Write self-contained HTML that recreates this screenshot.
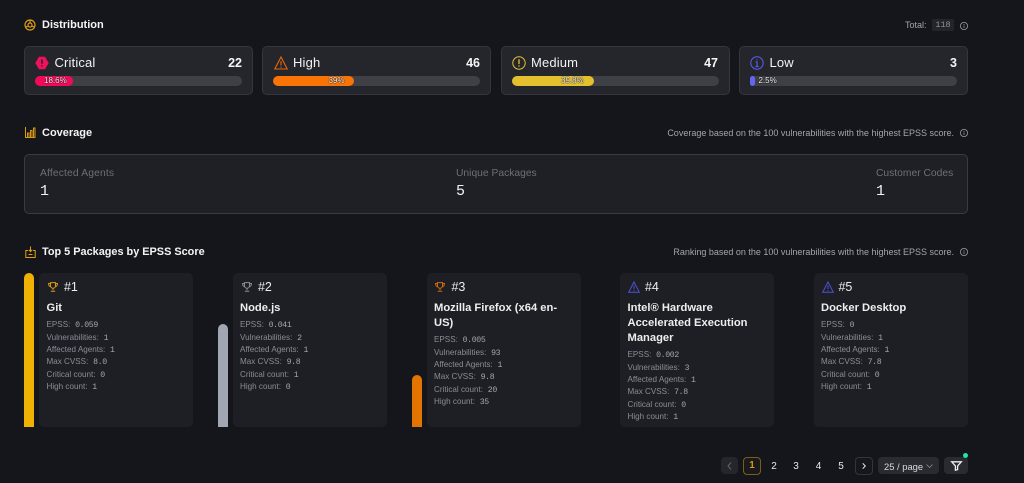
<!DOCTYPE html>
<html><head><meta charset="utf-8"><style>
html,body{margin:0;padding:0;background:#15161b;}
body{width:1024px;height:483px;position:relative;overflow:hidden;font-family:"Liberation Sans",sans-serif;color:#fff;}
.a{position:absolute;white-space:nowrap;}
svg{position:absolute;overflow:visible;}
.h{font-size:11px;font-weight:700;line-height:14px;color:#f4f4f5;}
.n{font-size:9px;color:#a3a5ab;line-height:12px;}
.sev{position:absolute;top:46px;height:47px;width:227px;background:#25262c;border:1px solid #35363c;border-radius:5px;}
.track{position:absolute;top:76px;height:10px;width:207px;background:#3f4046;border-radius:5px;}
.fill{position:absolute;top:76px;height:10px;border-radius:5px;}
.pct{font-size:8px;line-height:10px;top:76px;color:#f6f6f6;text-shadow:0 0 1px #000,0 0 1px #000;}
.lab{font-size:13px;line-height:16px;top:55px;color:#f2f2f4;letter-spacing:.15px;}
.num{font-size:12.5px;font-weight:700;line-height:16px;top:55px;color:#f5f5f5;}
.cl{font-size:10.3px;line-height:13px;top:167px;color:#6c6f77;}
.cv{font-size:15px;line-height:16px;top:184px;color:#f1f1f1;font-family:"Liberation Mono",monospace;}
.card{position:absolute;top:273px;height:154px;width:154px;background:#1e1f25;border-radius:5px;}
.bar{position:absolute;width:10px;border-radius:5px 5px 0 0;}
.rk{font-size:12.5px;line-height:16px;top:279px;color:#ececee;letter-spacing:-.1px;}
.t{font-size:11.2px;font-weight:700;line-height:15px;color:#eeeeef;}
.r{font-size:8.1px;line-height:12px;color:#8a8d95;}
.r b{font-family:"Liberation Mono",monospace;font-weight:400;color:#a4a6ac;margin-left:2.5px;font-size:8.2px;letter-spacing:-.35px;}
.pg{font-size:10px;line-height:17px;top:458px;color:#e8e8ea;text-align:center;width:18px;}
</style></head><body>

<!-- Distribution -->
<svg style="left:24px;top:19px" width="12" height="12" viewBox="0 0 12 12" fill="none" stroke="#e0a010" stroke-width="1.15"><circle cx="6" cy="6" r="5"/><circle cx="6" cy="6" r="2"/><path d="M6 1v3M1.5 8l3-1M10.5 8l-3-1"/></svg>
<div class="a h" style="left:42px;top:18px">Distribution</div>
<div class="a n" style="left:905px;top:19px">Total:</div>
<div class="a" style="left:932px;top:19px;width:22px;height:12px;background:#24252b;border-radius:2px;font:8.5px/12px 'Liberation Mono',monospace;color:#8f9197;text-align:center">118</div>
<svg style="left:959.5px;top:21.5px" width="8" height="8" viewBox="0 0 8 8" fill="none" stroke="#9a9ca2" stroke-width=".8"><circle cx="4" cy="4" r="3.6"/><path d="M4 3.5v2.4M4 2v.9"/></svg>

<div class="sev" style="left:24px"></div>
<div class="sev" style="left:262px"></div>
<div class="sev" style="left:500.5px"></div>
<div class="sev" style="left:739px"></div>

<svg style="left:35px;top:56px" width="14" height="14" viewBox="0 0 14 14"><path d="M4 .8h6l3.7 6.2-3.7 6.2H4L.3 7z" fill="#f0105c"/><path d="M7 3.5v4.2M7 9.2v1.2" stroke="#25262c" stroke-width="1.6"/></svg>
<div class="a lab" style="left:54.5px">Critical</div>
<div class="a num" style="right:782px">22</div>
<div class="track" style="left:35px"></div>
<div class="fill" style="left:35px;width:38px;background:#f4095a"></div>
<div class="a pct" style="left:44px">18.6%</div>

<svg style="left:274px;top:56px" width="14" height="14" viewBox="0 0 14 14" fill="none" stroke="#e8660c" stroke-width="1.1"><path d="M7 1L.8 13h12.4z"/><path d="M7 5v4.5M7 10.6v1"/></svg>
<div class="a lab" style="left:293px">High</div>
<div class="a num" style="right:544px">46</div>
<div class="track" style="left:273px"></div>
<div class="fill" style="left:273px;width:81px;background:#f97306"></div>
<div class="a pct" style="left:328.5px">39%</div>

<svg style="left:512px;top:56px" width="14" height="14" viewBox="0 0 14 14" fill="none" stroke="#e4c02e" stroke-width="1"><circle cx="7" cy="7" r="6.2"/><path d="M7 3.3v4.8M7 9.4v1.2" stroke-width="1.3"/></svg>
<div class="a lab" style="left:531px">Medium</div>
<div class="a num" style="right:306px">47</div>
<div class="track" style="left:511.5px"></div>
<div class="fill" style="left:511.5px;width:82px;background:#e4c02e"></div>
<div class="a pct" style="left:561px">39.8%</div>

<svg style="left:750px;top:56px" width="14" height="14" viewBox="0 0 14 14" fill="none" stroke="#5b5ff0" stroke-width="1"><circle cx="7" cy="7" r="6.2"/><path d="M5.5 6h1.6v4.4M5.3 10.6h3.4M7 3.2v1.2" stroke-width="1.1"/></svg>
<div class="a lab" style="left:769.5px">Low</div>
<div class="a num" style="right:67px">3</div>
<div class="track" style="left:749.5px"></div>
<div class="fill" style="left:749.5px;width:5.5px;background:#6366f1"></div>
<div class="a pct" style="left:758.5px">2.5%</div>

<!-- Coverage -->
<svg style="left:25px;top:127px" width="11" height="11" viewBox="0 0 11 11" fill="none" stroke="#d99a12" stroke-width="1"><path d="M.5 0v10.5h10M2.5 6h1.5v4.5H2.5zM5.5 3.5H7v7H5.5zM8.5 1H10v9.5H8.5z"/></svg>
<div class="a h" style="left:42px;top:126px">Coverage</div>
<div class="a n" style="right:70px;top:127px">Coverage based on the 100 vulnerabilities with the highest EPSS score.</div>
<svg style="left:959.5px;top:129px" width="8" height="8" viewBox="0 0 8 8" fill="none" stroke="#9a9ca2" stroke-width=".8"><circle cx="4" cy="4" r="3.6"/><path d="M4 3.5v2.4M4 2v.9"/></svg>

<div class="a" style="left:24px;top:154px;width:942px;height:58px;background:#1f2026;border:1px solid #3a3b41;border-radius:5px"></div>
<div class="a cl" style="left:40px;letter-spacing:.15px">Affected Agents</div>
<div class="a cv" style="left:40px">1</div>
<div class="a cl" style="left:456px">Unique Packages</div>
<div class="a cv" style="left:456px">5</div>
<div class="a cl" style="left:876px">Customer Codes</div>
<div class="a cv" style="left:876px">1</div>

<!-- Top 5 -->
<svg style="left:25px;top:246px" width="11" height="12" viewBox="0 0 11 12" fill="none" stroke="#e0a010" stroke-width="1"><path d="M3 4.5H.8v7h9.4v-7H8M5.5 .5v5M3.8 3.8l1.7 1.8 1.7-1.8M3.5 8.5h4" /></svg>
<div class="a h" style="left:42px;top:245px;font-size:10.9px">Top 5 Packages by EPSS Score</div>
<div class="a n" style="right:70px;top:246px">Ranking based on the 100 vulnerabilities with the highest EPSS score.</div>
<svg style="left:959.5px;top:248px" width="8" height="8" viewBox="0 0 8 8" fill="none" stroke="#9a9ca2" stroke-width=".8"><circle cx="4" cy="4" r="3.6"/><path d="M4 3.5v2.4M4 2v.9"/></svg>

<div class="bar" style="left:24px;top:273px;height:154px;background:#f0b105"></div>
<div class="card" style="left:39px"></div>
<div class="bar" style="left:218px;top:324px;height:103px;background:#a0a7b3"></div>
<div class="card" style="left:233px"></div>
<div class="bar" style="left:411.5px;top:375px;height:52px;background:#e37400"></div>
<div class="card" style="left:426.5px"></div>
<div class="card" style="left:620px"></div>
<div class="card" style="left:813.7px"></div>

<!-- Card 1 -->
<svg style="left:48px;top:282px" width="10" height="10" viewBox="0 0 10 10" fill="none" stroke="#d99a12" stroke-width="1"><path d="M2.5.6h5v3.2a2.5 2.5 0 0 1-5 0zM2.5 1.5H.6c0 2 .8 3 1.9 3M7.5 1.5h1.9c0 2-.8 3-1.9 3M5 6.3v2M2.8 9.3h4.4"/></svg>
<div class="a rk" style="left:64px">#1</div>
<div class="a t" style="left:46.5px;top:301px">Git</div>
<div class="a r" style="left:46.5px;top:319px">EPSS: <b>0.059</b></div>
<div class="a r" style="left:46.5px;top:331.5px">Vulnerabilities: <b>1</b></div>
<div class="a r" style="left:46.5px;top:344px">Affected Agents: <b>1</b></div>
<div class="a r" style="left:46.5px;top:356px">Max CVSS: <b>8.0</b></div>
<div class="a r" style="left:46.5px;top:368.5px">Critical count: <b>0</b></div>
<div class="a r" style="left:46.5px;top:381px">High count: <b>1</b></div>

<!-- Card 2 -->
<svg style="left:241.5px;top:282px" width="10" height="10" viewBox="0 0 10 10" fill="none" stroke="#8b8e96" stroke-width="1"><path d="M2.5.6h5v3.2a2.5 2.5 0 0 1-5 0zM2.5 1.5H.6c0 2 .8 3 1.9 3M7.5 1.5h1.9c0 2-.8 3-1.9 3M5 6.3v2M2.8 9.3h4.4"/></svg>
<div class="a rk" style="left:258px">#2</div>
<div class="a t" style="left:240px;top:301px">Node.js</div>
<div class="a r" style="left:240px;top:319px">EPSS: <b>0.041</b></div>
<div class="a r" style="left:240px;top:331.5px">Vulnerabilities: <b>2</b></div>
<div class="a r" style="left:240px;top:344px">Affected Agents: <b>1</b></div>
<div class="a r" style="left:240px;top:356px">Max CVSS: <b>9.8</b></div>
<div class="a r" style="left:240px;top:368.5px">Critical count: <b>1</b></div>
<div class="a r" style="left:240px;top:381px">High count: <b>0</b></div>

<!-- Card 3 -->
<svg style="left:435px;top:282px" width="10" height="10" viewBox="0 0 10 10" fill="none" stroke="#d2690c" stroke-width="1"><path d="M2.5.6h5v3.2a2.5 2.5 0 0 1-5 0zM2.5 1.5H.6c0 2 .8 3 1.9 3M7.5 1.5h1.9c0 2-.8 3-1.9 3M5 6.3v2M2.8 9.3h4.4"/></svg>
<div class="a rk" style="left:451.5px">#3</div>
<div class="a t" style="left:434px;top:301px">Mozilla Firefox (x64 en-</div>
<div class="a t" style="left:434px;top:316px">US)</div>
<div class="a r" style="left:434px;top:334px">EPSS: <b>0.005</b></div>
<div class="a r" style="left:434px;top:346.5px">Vulnerabilities: <b>93</b></div>
<div class="a r" style="left:434px;top:359px">Affected Agents: <b>1</b></div>
<div class="a r" style="left:434px;top:371px">Max CVSS: <b>9.8</b></div>
<div class="a r" style="left:434px;top:383.5px">Critical count: <b>20</b></div>
<div class="a r" style="left:434px;top:396px">High count: <b>35</b></div>

<!-- Card 4 -->
<svg style="left:628px;top:281px" width="12" height="12" viewBox="0 0 12 12" fill="none" stroke="#4f52d8" stroke-width="1"><path d="M6 1L.7 11.2h10.6z"/><path d="M6 4.5v3.6M6 9v1"/></svg>
<div class="a rk" style="left:645px">#4</div>
<div class="a t" style="left:627.5px;top:301px">Intel® Hardware</div>
<div class="a t" style="left:627.5px;top:316px">Accelerated Execution</div>
<div class="a t" style="left:627.5px;top:331px">Manager</div>
<div class="a r" style="left:627.5px;top:349px">EPSS: <b>0.002</b></div>
<div class="a r" style="left:627.5px;top:361.5px">Vulnerabilities: <b>3</b></div>
<div class="a r" style="left:627.5px;top:374px">Affected Agents: <b>1</b></div>
<div class="a r" style="left:627.5px;top:386px">Max CVSS: <b>7.8</b></div>
<div class="a r" style="left:627.5px;top:398.5px">Critical count: <b>0</b></div>
<div class="a r" style="left:627.5px;top:411px">High count: <b>1</b></div>

<!-- Card 5 -->
<svg style="left:821.5px;top:281px" width="12" height="12" viewBox="0 0 12 12" fill="none" stroke="#4f52d8" stroke-width="1"><path d="M6 1L.7 11.2h10.6z"/><path d="M6 4.5v3.6M6 9v1"/></svg>
<div class="a rk" style="left:838.5px">#5</div>
<div class="a t" style="left:821px;top:301px">Docker Desktop</div>
<div class="a r" style="left:821px;top:319px">EPSS: <b>0</b></div>
<div class="a r" style="left:821px;top:331.5px">Vulnerabilities: <b>1</b></div>
<div class="a r" style="left:821px;top:344px">Affected Agents: <b>1</b></div>
<div class="a r" style="left:821px;top:356px">Max CVSS: <b>7.8</b></div>
<div class="a r" style="left:821px;top:368.5px">Critical count: <b>0</b></div>
<div class="a r" style="left:821px;top:381px">High count: <b>1</b></div>

<!-- Pagination -->
<div class="a" style="left:721px;top:457px;width:17px;height:17px;background:#25262c;border-radius:4px"></div>
<svg style="left:727px;top:462px" width="5" height="8" viewBox="0 0 5 8" fill="none" stroke="#62646a" stroke-width="1"><path d="M4 .5L1 4l3 3.5"/></svg>
<div class="a" style="left:743px;top:457px;width:16px;height:16px;border:1px solid #7d5c16;border-radius:4px;background:#1a1a1c"></div>
<div class="a" style="left:743px;top:457px;width:18px;font:bold 10px/18px 'Liberation Sans',sans-serif;color:#d99a12;text-align:center">1</div>
<div class="a pg" style="left:765px">2</div>
<div class="a pg" style="left:787px">3</div>
<div class="a pg" style="left:809.5px">4</div>
<div class="a pg" style="left:832px">5</div>
<div class="a" style="left:855px;top:457px;width:16px;height:16px;border:1px solid #34353b;border-radius:4px;background:#16171b"></div>
<svg style="left:861.5px;top:462.5px" width="4" height="6" viewBox="0 0 4 6" fill="none" stroke="#e8e8ea" stroke-width="1"><path d="M.7 .3L3.3 3 .7 5.7"/></svg>
<div class="a" style="left:877.7px;top:457px;width:61px;height:17px;background:#2a2b31;border-radius:4px"></div>
<div class="a" style="left:884px;top:457.5px;font-size:9.4px;line-height:17px;color:#d8d8da">25 / page</div>
<svg style="left:925.5px;top:464px" width="7" height="4" viewBox="0 0 7 4" fill="none" stroke="#85878d" stroke-width=".8"><path d="M.5 .5L3.5 3.5 6.5 .5"/></svg>
<div class="a" style="left:944px;top:457px;width:23.7px;height:17px;background:#2a2b31;border-radius:4px"></div>
<svg style="left:950.5px;top:460.5px" width="11" height="10" viewBox="0 0 11 10" fill="none" stroke="#f0f0f0" stroke-width="1.3"><path d="M.7 .8h9.6L6.6 5v3.6L4.4 9.2V5z"/></svg>
<div class="a" style="left:962.5px;top:452.5px;width:5px;height:5px;border-radius:50%;background:#1ee6a8"></div>
</body></html>
